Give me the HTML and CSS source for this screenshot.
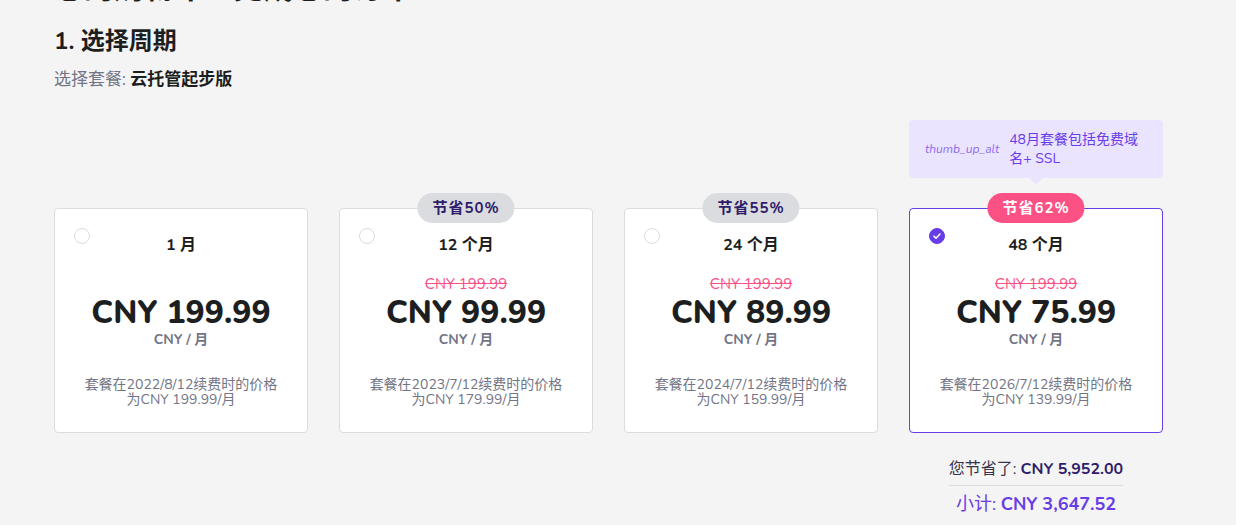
FILE: index.html
```html
<!DOCTYPE html>
<html lang="zh">

<head>
    <meta charset="UTF-8">
    <title>您的购物车</title>
    <link rel="stylesheet" href="styles.css">
</head>

<body>
    <div class="page">
        <h1 class="page-title">您的购物车 - 完成您的订单</h1>

        <h2 class="step-title">1. 选择周期</h2>
        <p class="plan-name">选择套餐: <strong>云托管起步版</strong></p>

        <div class="row hints">
            <div></div>
            <div></div>
            <div></div>
            <div class="hint">
                <span class="hint-icon">thumb_up_alt</span>
                <span class="hint-text">48月套餐包括免费域名+ SSL</span>
            </div>
        </div>

        <div class="row periods">
            <div class="period">
                <span class="radio"></span>
                <div class="period-name">1 月</div>
                <div class="old-price empty">&nbsp;</div>
                <div class="price">CNY 199.99</div>
                <div class="unit">CNY / 月</div>
                <div class="renew">套餐在2022/8/12续费时的价格<br>为CNY 199.99/月</div>
            </div>

            <div class="period">
                <span class="badge">节省50%</span>
                <span class="radio"></span>
                <div class="period-name">12 个月</div>
                <div class="old-price">CNY 199.99</div>
                <div class="price">CNY 99.99</div>
                <div class="unit">CNY / 月</div>
                <div class="renew">套餐在2023/7/12续费时的价格<br>为CNY 179.99/月</div>
            </div>

            <div class="period">
                <span class="badge">节省55%</span>
                <span class="radio"></span>
                <div class="period-name">24 个月</div>
                <div class="old-price">CNY 199.99</div>
                <div class="price">CNY 89.99</div>
                <div class="unit">CNY / 月</div>
                <div class="renew">套餐在2024/7/12续费时的价格<br>为CNY 159.99/月</div>
            </div>

            <div class="period selected">
                <span class="badge hot">节省62%</span>
                <span class="radio checked">
                    <svg width="10" height="10" viewBox="0 0 10 10"><path d="M2 5.2l2 2 4-4.2" fill="none" stroke="#fff" stroke-width="1.6" stroke-linecap="round" stroke-linejoin="round"/></svg>
                </span>
                <div class="period-name">48 个月</div>
                <div class="old-price">CNY 199.99</div>
                <div class="price">CNY 75.99</div>
                <div class="unit">CNY / 月</div>
                <div class="renew">套餐在2026/7/12续费时的价格<br>为CNY 139.99/月</div>
            </div>
        </div>

        <div class="row totals">
            <div></div>
            <div></div>
            <div></div>
            <div class="summary">
                <div class="saved">您节省了: <strong>CNY 5,952.00</strong></div>
                <div class="subtotal">小计: <strong>CNY 3,647.52</strong></div>
            </div>
        </div>
    </div>
</body>

</html>
```

FILE: styles.css
```css
body {
    margin: 0;
    background-color: #f4f4f4;
    font-family: 'Nunito', 'Lato', 'Noto Sans CJK SC', sans-serif;
    color: #1d1e20;
}

.page {
    width: 1109px;
    margin-left: 54px;
}

.page-title {
    font-size: 30px;
    font-weight: 700;
    line-height: 40px;
    margin: -31px 0 0 0;
}

.step-title {
    font-size: 24px;
    font-weight: 700;
    line-height: 32px;
    margin: 16px 0 0 0;
}

.plan-name {
    font-size: 17px;
    line-height: 24px;
    color: #727586;
    margin: 11px 0 0 0;
}

.plan-name strong {
    color: #1d1e20;
}

.row {
    display: grid;
    grid-template-columns: repeat(4, 254px);
    column-gap: 31px;
}

.hints {
    margin-top: 28px;
}

.hint {
    position: relative;
    display: flex;
    align-items: center;
    gap: 10px;
    background-color: #ebe4ff;
    border-radius: 4px;
    padding: 9px 16px;
    height: 40px;
}

.hint::after {
    content: '';
    position: absolute;
    left: 50%;
    bottom: -7px;
    margin-left: -7px;
    border-left: 7px solid transparent;
    border-right: 7px solid transparent;
    border-top: 7px solid #ebe4ff;
}

.hint-icon {
    font-size: 12px;
    font-style: italic;
    color: #8c6cf0;
    white-space: nowrap;
}

.hint-text {
    font-size: 14px;
    line-height: 19px;
    color: #673de6;
}

.periods {
    margin-top: 30px;
}

.period {
    position: relative;
    background-color: #fff;
    border: 1px solid #dadce0;
    border-radius: 4px;
    padding: 25px 16px 25px;
    text-align: center;
}

.period.selected {
    border-color: #673de6;
}

.badge {
    position: absolute;
    top: -16px;
    left: 50%;
    transform: translateX(-50%);
    background-color: #dadce0;
    color: #2f1c6a;
    font-size: 15px;
    font-weight: 700;
    letter-spacing: 1px;
    line-height: 30px;
    padding: 0 15px;
    border-radius: 15px;
    white-space: nowrap;
}

.badge.hot {
    background-color: #fc5185;
    color: #fff;
}

.radio {
    position: absolute;
    top: 19px;
    left: 19px;
    width: 14px;
    height: 14px;
    border: 1px solid #dadce0;
    border-radius: 50%;
    display: flex;
    align-items: center;
    justify-content: center;
}

.radio.checked {
    background-color: #673de6;
    border-color: #673de6;
}

.period-name {
    font-size: 16px;
    font-weight: 700;
    line-height: 22px;
}

.old-price {
    margin-top: 18px;
    font-size: 15px;
    line-height: 20px;
    color: #fc5185;
    text-decoration: line-through;
}

.old-price.empty {
    text-decoration: none;
}

.price {
    font-size: 32px;
    font-weight: 800;
    line-height: 38px;
}

.unit {
    font-size: 14px;
    font-weight: 700;
    line-height: 16px;
    color: #727586;
}

.renew {
    margin-top: 29px;
    font-size: 14px;
    line-height: 15px;
    color: #727586;
}

.totals {
    margin-top: 26px;
}

.summary {
    display: flex;
    flex-direction: column;
    align-items: center;
}

.saved {
    font-size: 16px;
    line-height: 20px;
    color: #36344d;
    padding: 0 0 6px;
    text-align: center;
    border-bottom: 1px solid #dadce0;
}

.saved strong {
    color: #2f1c6a;
}

.subtotal {
    margin-top: 7px;
    font-size: 18px;
    line-height: 22px;
    color: #673de6;
}
```
